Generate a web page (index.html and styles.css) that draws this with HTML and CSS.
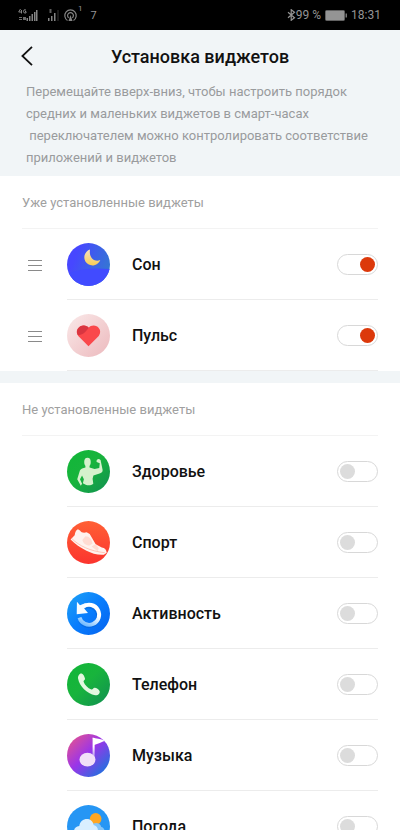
FILE: index.html
```html
<!DOCTYPE html>
<html lang="ru">
<head>
<meta charset="utf-8">
<meta name="viewport" content="width=device-width, initial-scale=1">
<title>Установка виджетов</title>
<link rel="stylesheet" href="styles.css">
</head>
<body>
<div class="status">
  <div class="status-group">
    <svg class="signals" width="60" height="17" viewBox="0 0 60 17" fill="#858585" aria-hidden="true">
      <g fill="none" stroke="#858585"><path d="M2.500 2L.7 5H4M3.500 3v3.500M8 3Q5.500 2 5.500 4.300T8 6V4.500H7"/></g>
      <path d="M1 10h3v1H1zM1 12h3v1H1zM5 10h3v3H5z" opacity=".8"/>
      <path d="M8.500 11H10v3H8.500zM11 9h1.500v5H11zM13.500 7H15v7h-1.500zM16 5h1.500v9H16zM18 3h1.500v11H18z"/>
      <path d="M30 11h1.500v3H30zM33 9h1.500v5H33zM36 6h1.500v8H36z"/><path d="M39.500 3h1v11h-1z" opacity=".4"/><path d="M31.500 2h2v4h-2z" opacity=".7"/>
      <g fill="none" stroke="#858585" stroke-width="1.200"><path d="M49.500 13.500a5.700 5.700 0 1 1 6 0M50.700 10.800a2.900 2.900 0 1 1 3.600 0"/></g>
      <path d="M52.500 8l2 6h-4z"/>
    </svg>
    <span class="status-sup">1</span>
    <span class="status-seven">7</span>
  </div>
  <div class="status-group">
    <svg width="9" height="12" viewBox="0 0 9 12" fill="none" stroke="#949494" stroke-width="1.200" aria-hidden="true"><path d="M1 3.300l6.500 5.400L4.200 11.300V.7l3.300 2.600L1 8.700"/></svg>
    <span>99 %</span>
    <svg class="battery" width="22" height="11" viewBox="0 0 22 11" aria-hidden="true"><rect x=".5" y=".5" width="19" height="10" rx="1" fill="#949494" stroke="#626262"/><path d="M20.500 3.500H22v4h-1.500z" fill="#777"/></svg>
    <span>18:31</span>
  </div>
</div>
<header class="top">
  <div class="titlebar">
    <button class="back" type="button" aria-label="Назад"><svg width="12" height="20" viewBox="0 0 12 20" fill="none" stroke="#111" stroke-width="1.800"><path d="M11 .8L1.400 10 11 19.200"/></svg></button>
    <h1>Установка виджетов</h1>
  </div>
  <p class="hint">Перемещайте вверх-вниз, чтобы настроить порядок
средних и маленьких виджетов в смарт-часах
 переключателем можно контролировать соответствие
приложений и виджетов</p>
</header>
<main>
  <section>
    <h2>Уже установленные виджеты</h2>
    <ul>
      <li>
        <button class="drag" type="button" aria-label="Переместить"></button>
        <div class="row">
          <svg class="icon" viewBox="0 0 42 42" aria-hidden="true">
            <defs><linearGradient id="sleep" x1="0" x2="1" y1=".2" y2=".6"><stop offset=".2" stop-color="#4747ff"/><stop offset="1" stop-color="#3478d2"/></linearGradient><linearGradient id="moon" x1="0" x2="0" y1="0" y2="1"><stop stop-color="#f7dfc0"/><stop offset="1" stop-color="#f8cd55"/></linearGradient><clipPath id="disc"><circle cx="21" cy="21" r="21"/></clipPath></defs>
            <g clip-path="url(#disc)"><path fill="url(#sleep)" d="M0 0h42v42H0z"/><path fill="#414bff" d="M0 30Q18 23 42 25.500V42H0z"/></g>
            <path fill="url(#moon)" d="M22.500 6.300a8 8 0 1 0 10 10.200c-5 2.600-11.500-1.500-10-10.200z"/>
          </svg>
          <label for="w1">Сон</label><input id="w1" type="checkbox" role="switch" checked>
        </div>
      </li>
      <li>
        <button class="drag" type="button" aria-label="Переместить"></button>
        <div class="row">
          <svg class="icon" viewBox="0 0 42 42" aria-hidden="true">
            <defs><linearGradient id="pulse" x1="0" x2="1" y1="0" y2="1"><stop stop-color="#fae9e9"/><stop offset="1" stop-color="#ecb9bd"/></linearGradient></defs>
            <circle cx="21" cy="21" r="21" fill="url(#pulse)"/>
            <path fill="#fa484b" d="M21 31.500L11 21.500c-4-5.500 1-10.500 5.500-10.300 2 .1 3.600.9 4.700 2.200 1.500-2 5-3 7.800-1.400 3.500 2 4.500 6 2 9.500z"/>
            <path fill="#d93540" d="M10.600 20.500c-2.600-5 1.400-9.500 5.900-9.300 2 .1 3.600.9 4.700 2.200-3.700 5.100-5.700 7.100-10.600 7.100z"/>
          </svg>
          <label for="w2">Пульс</label><input id="w2" type="checkbox" role="switch" checked>
        </div>
      </li>
    </ul>
  </section>
  <section>
    <h2>Не установленные виджеты</h2>
    <ul>
      <li>
        <div class="row">
          <svg class="icon" viewBox="0 0 42 42" aria-hidden="true">
            <defs><linearGradient id="green" x1="0" x2="1" y1="0" y2="1"><stop stop-color="#11b638"/><stop offset=".45" stop-color="#18b43c"/><stop offset="1" stop-color="#118f52"/></linearGradient></defs>
            <circle cx="21" cy="21" r="21" fill="url(#green)"/>
            <g fill="#d5f1cc"><ellipse cx="20" cy="11.800" rx="3.200" ry="4.200"/><path d="M18 14.500h4v2.500l5 1.500 4.500-.8.500-4.700-3-1.200c-.7-1.500.5-3.200 2.300-3l1.500.9 2 9.800c.3 2-1.300 3-3 3.500l-6 2-.8 3 .7 5c-3 2.300-7 1.800-10.200-.5l1-4-1.800-3.500-2 3.500 2 4.500-1.200 1.800L10 28.500l2.600-8.500c.6-1.800 3.400-2.300 5.400-3z"/></g>
          </svg>
          <label for="w3">Здоровье</label><input id="w3" type="checkbox" role="switch">
        </div>
      </li>
      <li>
        <div class="row">
          <svg class="icon" viewBox="0 0 42 42" aria-hidden="true">
            <defs><linearGradient id="sport" x1="0" x2="0" y1="0" y2="1"><stop stop-color="#ff6035"/><stop offset="1" stop-color="#fb342e"/></linearGradient></defs>
            <circle cx="21" cy="21" r="21" fill="url(#sport)"/>
            <path fill="#fff3ee" d="M3.500 18L7.500 14c.4-3 1.500-5.600 3.200-5.900l2 1.200c1.300 2.300 3.800 2.400 6.500 1.800l3 1.500 5.800 10 6 3.300c2.700.3 4.600 2.200 4.800 5L36 33c-6 .5-12-1.500-17-4-6-3-11-6.500-15.500-11z"/>
            <path fill="#ffdcd2" d="M15 18.500l3-3.500c4 0 6 3 7 7l-3 2c-4-.5-6-2-7-5.500zM24 25l4-2.500 3 4-1 3z"/>
            <path fill="none" stroke="#ffb3a3" stroke-width=".7" d="M4.500 17C12 24.500 23 29.500 37 31"/>
          </svg>
          <label for="w4">Спорт</label><input id="w4" type="checkbox" role="switch">
        </div>
      </li>
      <li>
        <div class="row">
          <svg class="icon" viewBox="0 0 42 42" aria-hidden="true">
            <defs><linearGradient id="act" x1="0" x2="1" y1="0" y2="1"><stop stop-color="#1fa3f5"/><stop offset=".5" stop-color="#087dfd"/><stop offset="1" stop-color="#0562ee"/></linearGradient><linearGradient id="ring" gradientUnits="userSpaceOnUse" x1="24" x2="14" y1="11" y2="31"><stop offset=".4" stop-color="#fff"/><stop offset="1" stop-color="#70baff"/></linearGradient></defs>
            <circle cx="21" cy="21" r="21" fill="url(#act)"/>
            <path fill="none" stroke="#0757bd" stroke-opacity=".35" stroke-width="4.500" d="M17 15a9.500 9.500 0 1 1-4 13"/>
            <path fill="none" stroke="url(#ring)" stroke-width="3.800" d="M16 14.200A9.800 9.800 0 1 1 12.200 25"/>
            <path fill="#f8fcff" d="M9.700 9.500l3 3.400 5.500-2.200-1.400 5.500 3.700 4.300L9.500 21.800z"/>
          </svg>
          <label for="w5">Активность</label><input id="w5" type="checkbox" role="switch">
        </div>
      </li>
      <li>
        <div class="row">
          <svg class="icon" viewBox="0 0 42 42" aria-hidden="true">
            <circle cx="21" cy="21" r="21" fill="url(#green)"/>
            <path fill="#e3f7df" d="M14.300 10.200c1.600.5 3 3.200 3.300 5.200.1 1.500-1.800 1.700-1.400 3 1.200 3.300 4 6.200 7.600 7.500 1.500.5 1.600-1.800 3.200-1.700 1.900.2 3.900 1.600 4.800 3.100.9 2.300-1.600 4.700-4.300 4.200-8.100-1.700-15.300-8.600-16.700-16.400-.4-2.500 1.400-5.300 3.500-4.900z"/>
          </svg>
          <label for="w6">Телефон</label><input id="w6" type="checkbox" role="switch">
        </div>
      </li>
      <li>
        <div class="row">
          <svg class="icon" viewBox="0 0 42 42" aria-hidden="true">
            <defs><linearGradient id="music" x1=".15" x2=".9" y1=".1" y2=".85"><stop stop-color="#d94e9e"/><stop offset=".45" stop-color="#9b35e8"/><stop offset="1" stop-color="#256fdf"/></linearGradient><linearGradient id="stem" x1="0" x2="0" y1="0" y2="1"><stop offset=".4" stop-color="#fff"/><stop offset="1" stop-color="#fff" stop-opacity=".3"/></linearGradient></defs>
            <circle cx="21" cy="21" r="21" fill="url(#music)"/>
            <path fill="url(#stem)" d="M25 4h2v20h-2z"/><path fill="#fff" d="M25 3.500c3 1.200 8 1.300 12.300 3.200-3.500 1.200-7 3-10.800 4.100z"/>
            <ellipse cx="20" cy="25" rx="7.800" ry="6.800" fill="#f1dff8"/>
          </svg>
          <label for="w7">Музыка</label><input id="w7" type="checkbox" role="switch">
        </div>
      </li>
      <li>
        <div class="row">
          <svg class="icon" viewBox="0 0 42 42" aria-hidden="true">
            <circle cx="21" cy="21" r="21" fill="#2696f4"/>
            <circle cx="28" cy="13.500" r="5.700" fill="#ffa622"/>
            <path fill="#86c6f8" d="M24 20c2-3.500 8.500-3 9.500 1.500 3 .5 4 4 2.500 7H24z"/>
            <path fill="#d9efff" d="M10 31c-5-3-4-10 2-10.500C13 12 24.500 11 26 19.500c5 1 6 8 1 11.500z"/>
          </svg>
          <label for="w8">Погода</label><input id="w8" type="checkbox" role="switch">
        </div>
      </li>
    </ul>
  </section>
</main>
</body>
</html>
```
FILE: styles.css
```css
* { box-sizing: border-box; }
html { scrollbar-width: none; }
body { margin: 0; background: #fff; color: #111; font-family: Roboto, "Liberation Sans", sans-serif; }
h1, h2, p, ul { margin: 0; padding: 0; }
ul { list-style: none; }
button { border: 0; padding: 0; background: none; }

.status { display: flex; justify-content: space-between; height: 30px; padding: 0 19px 0 18px; background: #000; color: #949494; font-size: 12px; }
.status-group { display: flex; align-items: center; }
.status-sup { align-self: flex-start; padding-top: 4px; font-size: 8px; }
.status-seven { margin-left: 8px; font-size: 11px; }
.battery { margin: 0 4px; }
.status-group > span { white-space: nowrap; }

.top { padding-bottom: 7px; background: #f1f5f7; }
.titlebar { display: grid; grid-template-columns: 52px 1fr 52px; align-items: center; height: 51px; }
.back { display: flex; width: 52px; height: 50px; align-items: center; padding-left: 21px; }
h1 { padding-top: 2px; font-size: 18px; font-weight: 500; line-height: 24px; text-align: center; white-space: nowrap; }
.hint { padding-left: 26px; color: #999b9d; font-size: 13px; line-height: 22px; white-space: pre; }

section + section { border-top: 12px solid #f1f5f7; }
h2 { margin: 0 22px; height: 53px; border-bottom: 1px solid #f3f3f3; color: #a0a0a0; font-size: 13px; font-weight: 400; line-height: 54px; }
li { display: flex; justify-content: flex-end; height: 71px; padding-right: 22px; }
.drag { width: 14px; height: 11px; margin: 31px 25px 0 28px; border: solid #8a8a8a; border-width: 1px 0; background: linear-gradient(#8a8a8a, #8a8a8a) center / 100% 1px no-repeat; }
.row { display: flex; flex: 1; align-items: center; border-bottom: 1px solid #ececec; }
li > .row:first-child { margin-left: 67px; }
.icon { width: 43px; height: 43px; flex: none; }
label { flex: 1; padding-top: 2px; margin-left: 22px; font-size: 16px; font-weight: 500; line-height: 20px; }
input { appearance: none; width: 41px; height: 21px; margin: 0; padding: 2px; border: 1px solid #d8d8d8; border-radius: 11px; background: #fff; display: flex; }
input::before { content: ""; width: 15px; height: 15px; border-radius: 50%; background: #dcdcdc; }
input:checked { justify-content: flex-end; }
input:checked::before { background: #dc390b; }
```
